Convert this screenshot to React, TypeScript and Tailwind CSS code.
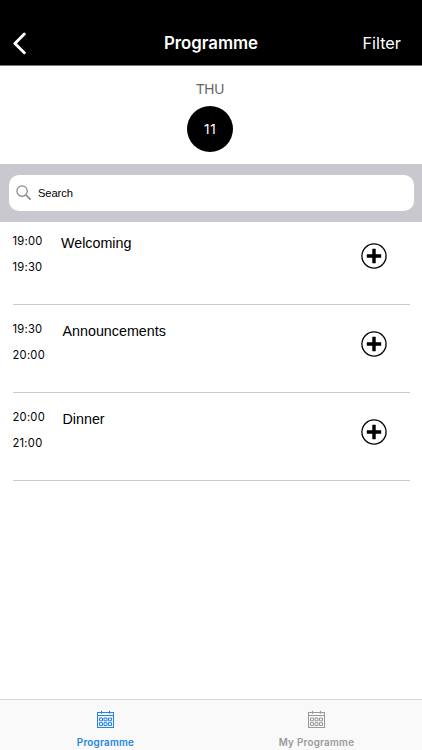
import clsx from "clsx";

const sessions = [
  { title: "Welcoming", start: "19:00", end: "19:30", titleClass: "pl-[61px]" },
  { title: "Announcements", start: "19:30", end: "20:00", titleClass: "pl-[62.5px]" },
  { title: "Dinner", start: "20:00", end: "21:00", titleClass: "pl-[62.5px]" },
];

function BackIcon() {
  return (
    <svg width="14" height="24" viewBox="0 0 14 24" fill="none" stroke="white" strokeWidth="2.9" strokeLinecap="round" strokeLinejoin="round">
      <path d="M12.3 3 L2.9 12.5 L12.3 21.8" />
    </svg>
  );
}

function SearchIcon() {
  return (
    <svg width="16" height="16" viewBox="0 0 16 16" fill="none" stroke="#858585">
      <circle cx="6.1" cy="6.1" r="5.2" strokeWidth="1.2" />
      <path d="M10 10 L14.6 14.6" strokeWidth="1.7" />
    </svg>
  );
}

function PlusIcon() {
  return (
    <svg width="26" height="26" viewBox="0 0 26 26" fill="none" stroke="black">
      <circle cx="13" cy="13" r="12.1" strokeWidth="1.3" />
      <path d="M13 5.8 V20.2 M5.8 13 H20.2" strokeWidth="3.4" />
    </svg>
  );
}

function CalendarIcon() {
  return (
    <svg width="17" height="18" viewBox="0 0 17 18" fill="none" stroke="currentColor" strokeWidth="1">
      <path d="M.5 2.5 H16.5 V17.5 H.5 Z M.5 5.5 H16.5 M4.5 .8 V3.8 M12.5 .8 V3.8" strokeWidth="1.1" />
      <path d="M2.5 8 h3 v2.8 h-3 Z M7 8 h3 v2.8 h-3 Z M11.5 8 h3 v2.8 h-3 Z" />
      <path d="M2.5 12.7 h3 v2.8 h-3 Z M7 12.7 h3 v2.8 h-3 Z M11.5 12.7 h3 v2.8 h-3 Z" />
    </svg>
  );
}

function Tab({ label, active }: { label: string; active?: boolean }) {
  return (
    <button
      className={clsx(
        "flex flex-1 flex-col items-center pt-[10px] text-[9.8px] leading-3 font-semibold tracking-[0.27px]",
        active ? "text-[#2484e0]" : "text-[#999999]",
      )}
    >
      <CalendarIcon />
      <span className="mt-[9px]">{label}</span>
    </button>
  );
}

export default function App() {
  return (
    <div className="flex h-[750px] w-[422px] flex-col overflow-hidden bg-white font-['Inter',sans-serif] text-black">
      <header className="grid h-[66px] shrink-0 grid-cols-3 items-center border-b border-[#777] bg-black px-[12px] pt-[21px] text-white">
        <BackIcon />
        <h1 className="text-center text-[16.8px] leading-5 font-semibold">Programme</h1>
        <button className="mr-[9px] justify-self-end text-[16.3px] leading-5">Filter</button>
      </header>

      <section className="flex h-[98px] shrink-0 flex-col items-center pt-[13px]">
        <span className="mr-[2px] font-['Liberation_Sans',sans-serif] text-[14px] leading-5 tracking-[-0.2px] text-[#666]">THU</span>
        <span className="mt-[7px] mr-[1.5px] flex size-[46px] items-center justify-center rounded-full bg-black text-[13.5px] tracking-[0.8px] text-white">
          11
        </span>
      </section>

      <div className="h-[58px] shrink-0 bg-[#c9c8ce] px-[8.5px] pt-[11px]">
        <label className="flex h-9 items-center rounded-[10px] bg-white pl-[7.5px]">
          <SearchIcon />
          <span className="ml-[6px] font-['Liberation_Sans',sans-serif] text-[11.2px] tracking-[-0.1px]">Search</span>
        </label>
      </div>

      <ul className="flex-1 px-[12.5px]">
        {sessions.map(({ title, start, end, titleClass }) => (
          <li key={title} className="flex h-[88.2px] border-b border-[#cbcbcb] first:h-[82.5px] not-first:pt-[5.7px]">
            <div className="flex w-0 flex-col pt-[10.8px] text-[11.2px] leading-4 tracking-[0.25px]">
              <span>{start}</span>
              <span className="mt-[10px]">{end}</span>
            </div>
            <h2 className={clsx("-ml-[12.5px] flex-1 pt-[11px] font-['Liberation_Sans',sans-serif] text-[14.3px] leading-5", titleClass)}>
              {title}
            </h2>
            <button className="mt-[21px] mr-[22.5px] self-start">
              <PlusIcon />
            </button>
          </li>
        ))}
      </ul>

      <nav className="flex h-[51px] shrink-0 border-t border-[#d8d8d8] bg-[#f9f9f9]">
        <Tab label="Programme" active />
        <Tab label="My Programme" />
      </nav>
    </div>
  );
}
